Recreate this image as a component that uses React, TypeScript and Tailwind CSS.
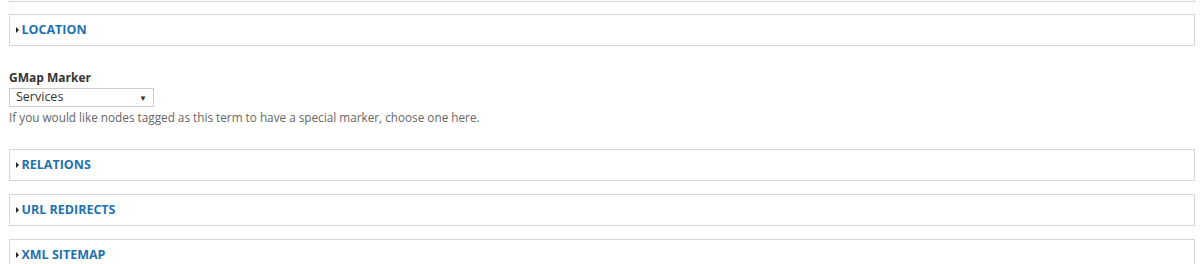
const sections = ["RELATIONS", "URL REDIRECTS", "XML SITEMAP"];

function Legend({ title }: { title: string }) {
  return (
    <div className="flex h-[32px] items-center border border-[#d6d6d6] bg-white px-[6px]">
      <span className="inline-block h-0 w-0 border-y-[3.5px] border-l-[3.5px] border-y-transparent border-l-[#222]" />
      <span className="ml-[2.5px] text-[12.5px] font-bold uppercase leading-none text-[#1e72b0]">
        {title}
      </span>
    </div>
  );
}

export default function App() {
  return (
    <div
      className="h-[264px] w-[1200px] overflow-hidden bg-white"
      style={{ fontFamily: '"Open Sans", "Liberation Sans", sans-serif' }}
    >
      <div className="mx-[9px] -mt-[30px] w-[1186px]">
        {/* bottom of the previous fieldset */}
        <div className="h-[32px] border border-[#d6d6d6]" />

        <div className="mt-[12px]">
          <Legend title="Location" />
        </div>

        <div className="mt-[23px]">
          <label className="block text-[12px] font-bold leading-[18px] text-[#333]">
            GMap Marker
          </label>
          <div className="mt-[1px] flex h-[19px] w-[145px] items-center justify-between border border-[#ccc] bg-white pl-[6px] pr-[6px]">
            <span className="text-[12.5px] leading-none text-[#333]">Services</span>
            <span className="text-[8px] leading-none text-[#333]">▼</span>
          </div>
          <p className="mt-[3px] text-[11.75px] leading-[15px] text-[#666]">
            If you would like nodes tagged as this term to have a special marker, choose one here.
          </p>
        </div>

        <div className="mt-[24px] flex flex-col gap-[13px]">
          {sections.map((s) => (
            <Legend key={s} title={s} />
          ))}
        </div>
      </div>
    </div>
  );
}
